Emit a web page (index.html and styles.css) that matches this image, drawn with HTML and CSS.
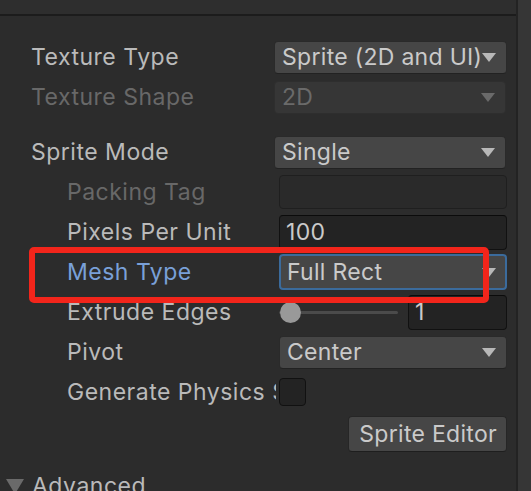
FILE: index.html
```html
<!DOCTYPE html>
<html>
<head>
<meta charset="utf-8">
<link rel="stylesheet" href="styles.css">
</head>
<body>
<div class="window">
  <div class="main">
    <div class="topbar"></div>
    <div class="props">
      <div class="row">
        <div class="label">Texture Type</div>
        <div class="dropdown"><span class="value">Sprite (2D and UI)</span><span class="arrow"></span></div>
      </div>
      <div class="row disabled">
        <div class="label">Texture Shape</div>
        <div class="dropdown"><span class="value">2D</span><span class="arrow"></span></div>
      </div>
      <div class="row section">
        <div class="label">Sprite Mode</div>
        <div class="dropdown"><span class="value">Single</span><span class="arrow"></span></div>
      </div>
      <div class="row sub disabled">
        <div class="label">Packing Tag</div>
        <div class="field empty"></div>
      </div>
      <div class="row sub">
        <div class="label">Pixels Per Unit</div>
        <div class="field"><span class="value">100</span></div>
      </div>
      <div class="row sub highlight">
        <div class="label focus">Mesh Type</div>
        <div class="dropdown focused"><span class="value">Full Rect</span><span class="arrow"></span></div>
        <div class="annotation"></div>
      </div>
      <div class="row sub">
        <div class="label">Extrude Edges</div>
        <div class="slider">
          <div class="track"><div class="thumb"></div></div>
          <div class="field num"><span class="value">1</span></div>
        </div>
      </div>
      <div class="row sub">
        <div class="label">Pivot</div>
        <div class="dropdown"><span class="value">Center</span><span class="arrow"></span></div>
      </div>
      <div class="row sub">
        <div class="label">Generate Physics Shape</div>
        <div class="checkbox"></div>
      </div>
      <div class="row buttons">
        <div class="button">Sprite Editor</div>
      </div>
    </div>
    <div class="foldout">
      <span class="fold-arrow"></span>
      <span class="fold-label">Advanced</span>
    </div>
  </div>
  <div class="scrollbar"></div>
</div>
</body>
</html>
```
FILE: styles.css
```css
html, body {
  margin: 0;
  padding: 0;
  background: #2c2c2c;
  overflow: hidden;
}

.window {
  display: flex;
  width: 531px;
  height: 491px;
  overflow: hidden;
  font-family: Inter, "Noto Sans", sans-serif;
  font-size: 23px;
  color: #bababa;
}

.main {
  width: 516px;
  flex: 0 0 516px;
  display: flex;
  flex-direction: column;
}

.scrollbar {
  flex: 1;
  border-left: 2px solid #232323;
  background: #363636;
}

.topbar {
  height: 14px;
  flex: 0 0 14px;
  background: #2e2e2e;
  border-bottom: 2px solid #1c1c1c;
}

.props {
  padding-top: 21px;
  display: flex;
  flex-direction: column;
}

.row {
  position: relative;
  height: 40px;
  display: flex;
  align-items: center;
  padding-right: 10px;
}

.row.section {
  margin-top: 15px;
}

.label {
  flex: 0 0 274px;
  box-sizing: border-box;
  padding-left: 31px;
  white-space: nowrap;
  overflow: hidden;
  letter-spacing: 0.5px;
}

.row.sub {
  padding-right: 9px;
}

.row.sub .label {
  flex: 0 0 276px;
  padding-left: 67px;
  margin-right: 3px;
}

.row.disabled .label {
  color: #686868;
}

.label.focus {
  color: #79a0d8;
}

.dropdown {
  flex: 1;
  height: 33px;
  box-sizing: border-box;
  display: flex;
  align-items: center;
  justify-content: space-between;
  padding: 0 10px 0 7px;
  background: #464646;
  border: 1px solid #2a2a2a;
  border-bottom-color: #222;
  border-radius: 4px;
  color: #cacaca;
  white-space: nowrap;
}

.dropdown .value {
  letter-spacing: 0.3px;
}

.arrow {
  width: 0;
  height: 0;
  border-left: 7.5px solid transparent;
  border-right: 7.5px solid transparent;
  border-top: 9px solid #b8b8b8;
}

.row.disabled .dropdown {
  background: #363636;
  border-color: #2e2e2e;
  color: #6a6a6a;
}

.row.disabled .arrow {
  border-top-color: #6a6a6a;
}

.dropdown.focused {
  height: 36px;
  border: 2px solid #3b6b9c;
  padding-left: 6px;
  padding-right: 9px;
}

.field {
  flex: 1;
  height: 35px;
  box-sizing: border-box;
  display: flex;
  align-items: center;
  padding-left: 6px;
  background: #232323;
  border: 1px solid #111;
  border-top-color: #0b0b0b;
  border-radius: 4px;
  color: #cacaca;
  letter-spacing: 0.3px;
}

.field.empty {
  background: #2a2a2a;
  border-color: #1f1f1f;
  height: 34px;
}

.slider {
  flex: 1;
  display: flex;
  align-items: center;
}

.track {
  position: relative;
  width: 119px;
  height: 3px;
  background: #4b4b4b;
  border-radius: 2px;
  margin-right: 10px;
}

.thumb {
  position: absolute;
  left: 1px;
  top: -9px;
  width: 21px;
  height: 21px;
  border-radius: 50%;
  background: #999;
}

.field.num {
  flex: 1;
}

.checkbox {
  width: 27px;
  height: 28px;
  box-sizing: border-box;
  background: #232323;
  border: 1px solid #111;
  border-radius: 4px;
}

.row.buttons {
  justify-content: flex-end;
  padding-right: 9px;
  margin-top: 2px;
}

.button {
  height: 36px;
  box-sizing: border-box;
  display: flex;
  align-items: center;
  padding: 0 9px 0 10px;
  background: #464646;
  border: 1px solid #262626;
  border-bottom-color: #1e1e1e;
  border-radius: 4px;
  color: #cacaca;
  letter-spacing: 0.3px;
}

.annotation {
  position: absolute;
  z-index: 5;
  left: 29px;
  top: -5px;
  width: 460px;
  height: 56px;
  box-sizing: border-box;
  border: 6px solid #f2251b;
  border-radius: 5px;
  pointer-events: none;
}

.foldout {
  display: flex;
  align-items: flex-start;
  margin-top: 18px;
  height: 28px;
}

.fold-arrow {
  margin-left: 6px;
  margin-right: 8px;
  margin-top: 7px;
  width: 0;
  height: 0;
  border-left: 9px solid transparent;
  border-right: 9px solid transparent;
  border-top: 15px solid #6a6a6a;
}

.fold-label {
  color: #bababa;
  letter-spacing: 0.5px;
}
```
